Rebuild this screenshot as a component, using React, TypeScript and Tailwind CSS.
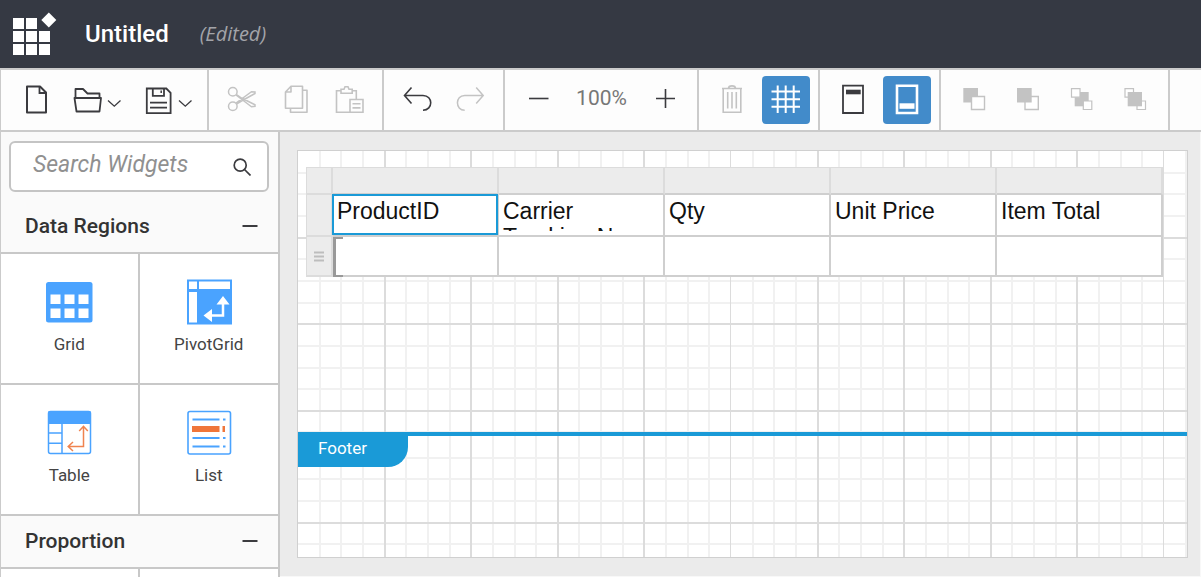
import type { ReactNode } from "react";

const DARK = "#3b3b3f";
const MUTED = "#c3c3c3";
const BLUE = "#4aa3ff";

function Glyph({ children, color = DARK, wide = false }: { children: ReactNode; color?: string; wide?: boolean }) {
  return (
    <svg
      className="block shrink-0"
      width={wide ? 64 : 48}
      height={48}
      viewBox={wide ? "0 0 64 48" : "0 0 48 48"}
      fill="none"
      stroke={color}
      strokeWidth={1.8}
      aria-hidden="true"
    >
      {children}
    </svg>
  );
}

function ToolButton({
  label,
  active = false,
  disabled = false,
  wide = false,
  children,
}: {
  label: string;
  active?: boolean;
  disabled?: boolean;
  wide?: boolean;
  children: ReactNode;
}) {
  return (
    <button
      type="button"
      aria-label={label}
      title={label}
      disabled={disabled}
      className={active ? "rounded bg-[#428bca]" : "rounded"}
    >
      <Glyph color={active ? "#ffffff" : disabled ? MUTED : DARK} wide={wide}>
        {children}
      </Glyph>
    </button>
  );
}

function ToolGroup({ children }: { children: ReactNode }) {
  return (
    <div className="flex shrink-0 items-center gap-1.5 border-r-2 border-[#cbcbcb] pr-2 pl-[9px]">{children}</div>
  );
}

function Header() {
  return (
    <header className="flex h-[68px] shrink-0 items-center bg-[#353943] pl-3">
      <svg width="46" height="46" viewBox="0 0 46 46" fill="#ffffff" aria-hidden="true">
        <path d="M1 7h11v11H1zM14 7h11v11H14zM1 20h11v11H1zM14 20h11v11H14zM27 20h11v11H27zM1 33h11v11H1zM14 33h11v11H14zM27 33h11v11H27z" />
        <path d="M36.800 1.500l7.500 7.500-7.500 7.500-7.500-7.500z" />
      </svg>
      <h1 className="ml-[27px] text-[24px] leading-8 font-medium text-white">Untitled</h1>
      <span className="ml-[31px] font-['Open_Sans',sans-serif] text-[20px] leading-8 text-[#a3a4a9] italic">(Edited)</span>
    </header>
  );
}

function Toolbar() {
  return (
    <div className="flex h-16 shrink-0 overflow-hidden border-y-2 border-l border-[#cbcbcb] bg-[#fdfdfd]" role="toolbar">
      <div className="flex shrink-0 items-center gap-1.5 border-r-2 border-[#cbcbcb] pr-[7px] pl-[11px]">
        <ToolButton label="New">
          <path d="M15 10.500h13l6 6V36.500H15z" strokeWidth={2} strokeLinejoin="round" />
          <path d="M27.500 10.500v6.500H34" />
        </ToolButton>
        <ToolButton label="Open" wide>
          <path d="M9.500 22v-9h7.500l4.500 4.500h12V22M8.500 22h26.500l-1.500 13.500h-23z" strokeLinejoin="round" />
          <path d="M42 24.500l6.300 5.700L54.500 24.500" strokeWidth={1.300} />
        </ToolButton>
        <ToolButton label="Save" wide>
          <path d="M10.800 12.500h19.500l4.300 4.300v20.400H10.800zM16.800 12.500v7.300h11.200v-7.300M14 26.700h17M14 31.700h17" />
          <path d="M25.200 14.500v2.500" strokeWidth={1.500} />
          <path d="M43 24.500l6.300 5.700L55.500 24.500" strokeWidth={1.300} />
        </ToolButton>
      </div>
      <ToolGroup>
        <ToolButton label="Cut" disabled>
          <g strokeWidth={1.500}>
            <circle cx="14.800" cy="15.800" r="4.300" />
            <circle cx="14.800" cy="30.200" r="4.300" />
            <path d="M18 27l15.500-11.300 3.500.3v1.500L23.500 25l-5 3M18 19l15.500 11.800 3.500-.5v-1.500L23.500 22l-5-3.500" />
          </g>
        </ToolButton>
        <ToolButton label="Copy" disabled>
          <g strokeWidth={1.600} strokeLinejoin="round">
            <path d="M19 10.300h11.500v22H13.500V16zM19 10.300V16h-5.500" />
            <path d="M30.500 14.300H35v22H18.500v-4" />
          </g>
        </ToolButton>
        <ToolButton label="Paste" disabled>
          <g strokeWidth={1.600}>
            <path d="M15 14.700h-4.500v21.500h13.500M26 14.700h4.300v8.500M15 17.200v-4h3l1-2.500h3l1 2.500h3.200v4z" />
            <path d="M24 23.500h13v12.800H24zM26.500 27.700h8M26.500 31.900h8" />
          </g>
        </ToolButton>
      </ToolGroup>
      <ToolGroup>
        <ToolButton label="Undo">
          <path d="M18.500 11.500l-7 8 7 8M11.500 19.500H30c10.300 0 10.300 14.700 0 14.700" strokeWidth={1.600} />
        </ToolButton>
        <ToolButton label="Redo" disabled>
          <path d="M29.200 11.500l7 8-7 8M36.200 19.500H17.700c-9.700 0-9.700 14.700 0 14.700" strokeWidth={1.500} />
        </ToolButton>
      </ToolGroup>
      <ToolGroup>
        <ToolButton label="Zoom out">
          <path d="M15 22.500h19.500" strokeWidth={1.600} />
        </ToolButton>
        <output className="w-[67px] pb-1 text-center text-[21px] leading-7 text-[#777777]">100%</output>
        <ToolButton label="Zoom in">
          <path d="M15 22.500h19M24.500 13v19" strokeWidth={1.600} />
        </ToolButton>
      </ToolGroup>
      <ToolGroup>
        <ToolButton label="Delete" disabled>
          <g strokeWidth={1.600}>
            <path d="M14 12.500h20M15.200 12.500v23.800h17.600V12.500M20.500 12.500c0-3.500 7-3.500 7 0M19.700 16v16.500M24 16v16.500M28.300 16v16.500" />
          </g>
        </ToolButton>
        <ToolButton label="Show grid lines" active>
          <path d="M15.700 9.500v27.500M23.700 9.500v27.500M31.700 9.500v27.500M9.500 15.600h28.500M9.500 23.200h28.500M9.500 30.800h28.500" strokeWidth={2} />
        </ToolButton>
      </ToolGroup>
      <ToolGroup>
        <ToolButton label="Header">
          <path d="M14 9.700h20v27.300H14z" />
          <path d="M17 13.700h14.700v4.600H17z" fill={DARK} stroke="none" />
        </ToolButton>
        <ToolButton label="Footer" active>
          <path d="M14 9.700h20v27.300H14z" strokeWidth={2.600} />
          <path d="M16.500 27.300h15v5.500h-15z" fill="#ffffff" stroke="none" />
        </ToolButton>
      </ToolGroup>
      <ToolGroup>
        <ToolButton label="Bring forward" disabled>
          <path d="M13.300 12H28v14.500H13.300z" fill={MUTED} stroke="none" />
          <path d="M21.500 20.500h13v13h-13z" fill="#ffffff" strokeWidth={1.400} />
        </ToolButton>
        <ToolButton label="Send backward" disabled>
          <path d="M21 20.500h13.300v13H21z" fill="#ffffff" strokeWidth={1.400} />
          <path d="M13 12h14.700v14.500H13z" fill={MUTED} stroke="none" />
        </ToolButton>
        <ToolButton label="Bring to front" disabled>
          <path d="M16.700 16h14v14.300h-14z" fill={MUTED} stroke="none" />
          <path d="M13.500 12.700h8.500v8.500h-8.500zM25.300 25h8.500v8.500h-8.500z" fill="#ffffff" strokeWidth={1.200} />
        </ToolButton>
        <ToolButton label="Send to back" disabled>
          <path d="M13 12.700h8.500v8.500H13zM25 25h8.500v8.500H25z" fill="#ffffff" strokeWidth={1.200} />
          <path d="M15.700 16H30v14.300H15.700z" fill={MUTED} stroke="none" />
        </ToolButton>
      </ToolGroup>
    </div>
  );
}

function SectionTitle({ children }: { children: ReactNode }) {
  return (
    <button
      type="button"
      aria-expanded="true"
      className="flex h-[53px] w-full shrink-0 items-center justify-between border-b-2 border-[#c8c8c8] pr-5 pb-0.5 pl-6 text-left text-[21px] leading-6 font-medium text-[#333333]"
    >
      {children}
      <svg width="16" height="16" viewBox="0 0 16 16" stroke={DARK} strokeWidth={2} aria-hidden="true">
        <path d="M.5 8h15" />
      </svg>
    </button>
  );
}

function Widget({ label, children }: { label: string; children?: ReactNode }) {
  return (
    <button
      type="button"
      className="flex h-[131px] flex-col items-center gap-1.5 border-b-2 border-[#c8c8c8] bg-white pt-6 text-[17px] leading-6 text-[#444444] odd:border-r-2"
    >
      <svg width="48" height="48" viewBox="0 0 48 48" fill="none" aria-hidden="true">
        {children}
      </svg>
      {label}
    </button>
  );
}

function Sidebar() {
  return (
    <aside className="flex w-[280px] shrink-0 flex-col overflow-hidden border-r-2 border-l border-r-[#c8c8c8] border-l-[#cbcbcb] bg-[#fafafa]">
      <label className="my-[9px] mr-[9px] ml-2 flex h-[51px] shrink-0 items-center rounded-md border-2 border-[#c4c4c4] bg-white pr-4 pl-[22px]">
        <input
          type="search"
          placeholder="Search Widgets"
          aria-label="Search Widgets"
          className="min-w-0 flex-1 pb-1 text-[23px] leading-7 italic outline-none placeholder:text-[#909090]"
        />
        <svg width="18" height="18" viewBox="0 0 18 18" fill="none" stroke={DARK} strokeWidth={1.700} aria-hidden="true">
          <circle cx="7.200" cy="7.200" r="6" />
          <path d="M11.500 11.500l6 6" />
        </svg>
      </label>
      <SectionTitle>Data Regions</SectionTitle>
      <div className="grid shrink-0 grid-cols-2">
        <Widget label="Grid">
          <rect x="1" y="4" width="46.500" height="40.500" rx="2.500" fill={BLUE} />
          <path
            d="M5.500 16.500h10v9.500h-10zM19.500 16.500h10v9.500h-10zM33.500 16.500h10v9.500h-10zM5.500 30.500h10v9.500h-10zM19.500 30.500h10v9.500h-10zM33.500 30.500h10v9.500h-10z"
            fill="#ffffff"
          />
        </Widget>
        <Widget label="PivotGrid">
          <path d="M2 1.500h45v45H2z" fill={BLUE} />
          <path d="M4 3.500h8v7.500H4zM14 3.500h31v7.500H14zM4 14h8v30.500H4z" fill="#ffffff" />
          <path d="M38 25v12.500H25" stroke="#ffffff" strokeWidth={2.500} />
          <path d="M38 18l6.500 8.500h-13zM18.500 37.500l8.500-6.500v13z" fill="#ffffff" />
        </Widget>
        <Widget label="Table">
          <rect x="3.500" y="2.500" width="42" height="42" rx="2" stroke={BLUE} strokeWidth={1.500} />
          <path d="M3 2.500h43V15H3z" fill={BLUE} />
          <path d="M17 15v29.500M3.500 24H17M3.500 34.300H17" stroke={BLUE} strokeWidth={1.500} />
          <path d="M38.500 17v20.500H23.500M34.200 22l4.300-4.700 4.300 4.700M28 33l-4.800 4.500L28 42" stroke="#f0834f" strokeWidth={1.500} />
        </Widget>
        <Widget label="List">
          <rect x="3" y="2.500" width="42.500" height="42.500" rx="2" stroke={BLUE} strokeWidth={1.600} />
          <path d="M7.500 10.500h27M38 10.500h2.500M7.500 29h27M38 29h2.500M7.500 37.500h27M38 37.500h2.500" stroke={BLUE} strokeWidth={1.900} />
          <path d="M7 17h27.500v6H7zM37.500 17H40v6h-2.500z" fill="#f0763a" />
        </Widget>
      </div>
      <SectionTitle>Proportion</SectionTitle>
      <div className="grid shrink-0 grid-cols-2">
        <Widget label="" />
        <Widget label="" />
      </div>
    </aside>
  );
}

const PITCH = 21.65;
const steps = Array.from({ length: 20 }, (_, i) => i + 1);
const minor = steps.filter((i) => i % 4 !== 0).map((i) => Math.round(i * PITCH));
const major = steps.filter((i) => i % 4 === 0).map((i) => Math.round(i * PITCH));

function linePath(stops: number[]) {
  return stops.map((p) => `M${p} 0V433M0 ${p}H433`).join("");
}

function GridLines({ id }: { id: string }) {
  return (
    <svg className="absolute inset-0 h-full w-full" aria-hidden="true">
      <defs>
        <pattern id={id} x="0" y="0" width="433" height="433" patternUnits="userSpaceOnUse">
          <path d={linePath(minor)} stroke="#f1f1f1" strokeWidth={2} />
          <path d={linePath(major)} stroke="#dcdcdc" strokeWidth={2} />
        </pattern>
      </defs>
      <rect width="100%" height="100%" fill={`url(#${id})`} />
    </svg>
  );
}

const columns = ["ProductID", "Carrier Tracking No", "Qty", "Unit Price", "Item Total"];

function ReportTable() {
  return (
    <table className="relative w-[857px] table-fixed border-separate border-spacing-0 bg-white font-['Liberation_Sans',Arial,sans-serif] text-[23px] leading-[26px] text-[#111111]">
      <colgroup>
        <col className="w-[27px]" />
        {columns.map((name) => (
          <col key={name} className="w-[166px]" />
        ))}
      </colgroup>
      <tbody>
        <tr className="h-7 bg-[#ececec]">
          <td className="border-t border-r-2 border-b-2 border-l border-[#dcdcdc] p-0" />
          {columns.map((name) => (
            <td key={name} className="border-t border-r-2 border-b-2 border-[#dcdcdc] border-b-[#cfcfcf] p-0" />
          ))}
        </tr>
        <tr className="h-[42px]">
          <td className="border-r-2 border-b-2 border-l border-[#dcdcdc] bg-[#ececec] p-0" />
          {columns.map((name, i) => (
            <th
              key={name}
              scope="col"
              className="relative border-r-2 border-b-2 border-[#cfcfcf] p-0 text-left align-top font-normal"
            >
              <div className="mt-[3px] h-[33px] overflow-hidden px-1">{name}</div>
              {i === 0 && <span className="absolute -top-px -right-px bottom-0 -left-px border-2 border-[#1a9ad7]" />}
            </th>
          ))}
        </tr>
        <tr className="h-10">
          <td className="border-r-2 border-b-2 border-l border-[#dcdcdc] bg-[#ececec] p-0">
            <svg className="mx-auto" width="10" height="11" viewBox="0 0 10 11" stroke="#bdbdbd" strokeWidth={2} aria-hidden="true">
              <path d="M0 1.500h10M0 5.500h10M0 9.500h10" />
            </svg>
          </td>
          {columns.map((name, i) => (
            <td key={name} className="relative border-r-2 border-b-2 border-[#cfcfcf] p-0">
              {i === 0 && (
                <span className="absolute top-0 -bottom-0.5 left-0 w-2.5 border-y-2 border-l-[3px] border-[#999999]" />
              )}
            </td>
          ))}
        </tr>
      </tbody>
    </table>
  );
}

export default function App() {
  return (
    <div className="flex h-screen flex-col overflow-hidden bg-white font-[Roboto,sans-serif]">
      <Header />
      <Toolbar />
      <div className="flex min-h-0 flex-1">
        <Sidebar />
        <main className="flex min-w-0 flex-1 border-r border-b border-[#f8f8f8] bg-[#ebebeb] pt-[18px] pr-3 pb-[18px] pl-[17px]">
          <div className="flex min-w-0 flex-1 flex-col overflow-hidden border border-[#d0d0d0] bg-white">
            <section className="relative h-[281px] shrink-0 pt-4 pl-2" aria-label="Body">
              <GridLines id="body-grid" />
              <ReportTable />
            </section>
            <section className="flex min-h-0 flex-1 flex-col" aria-label="Footer">
              <div className="h-1 shrink-0 bg-[#1a9ad7]" />
              <div className="relative flex-1">
                <GridLines id="footer-grid" />
                <h2 className="relative h-[31px] w-[110px] rounded-br-[20px] bg-[#1a9ad7] pl-5 text-[17px] leading-6 text-white">
                  Footer
                </h2>
              </div>
            </section>
          </div>
        </main>
      </div>
    </div>
  );
}
